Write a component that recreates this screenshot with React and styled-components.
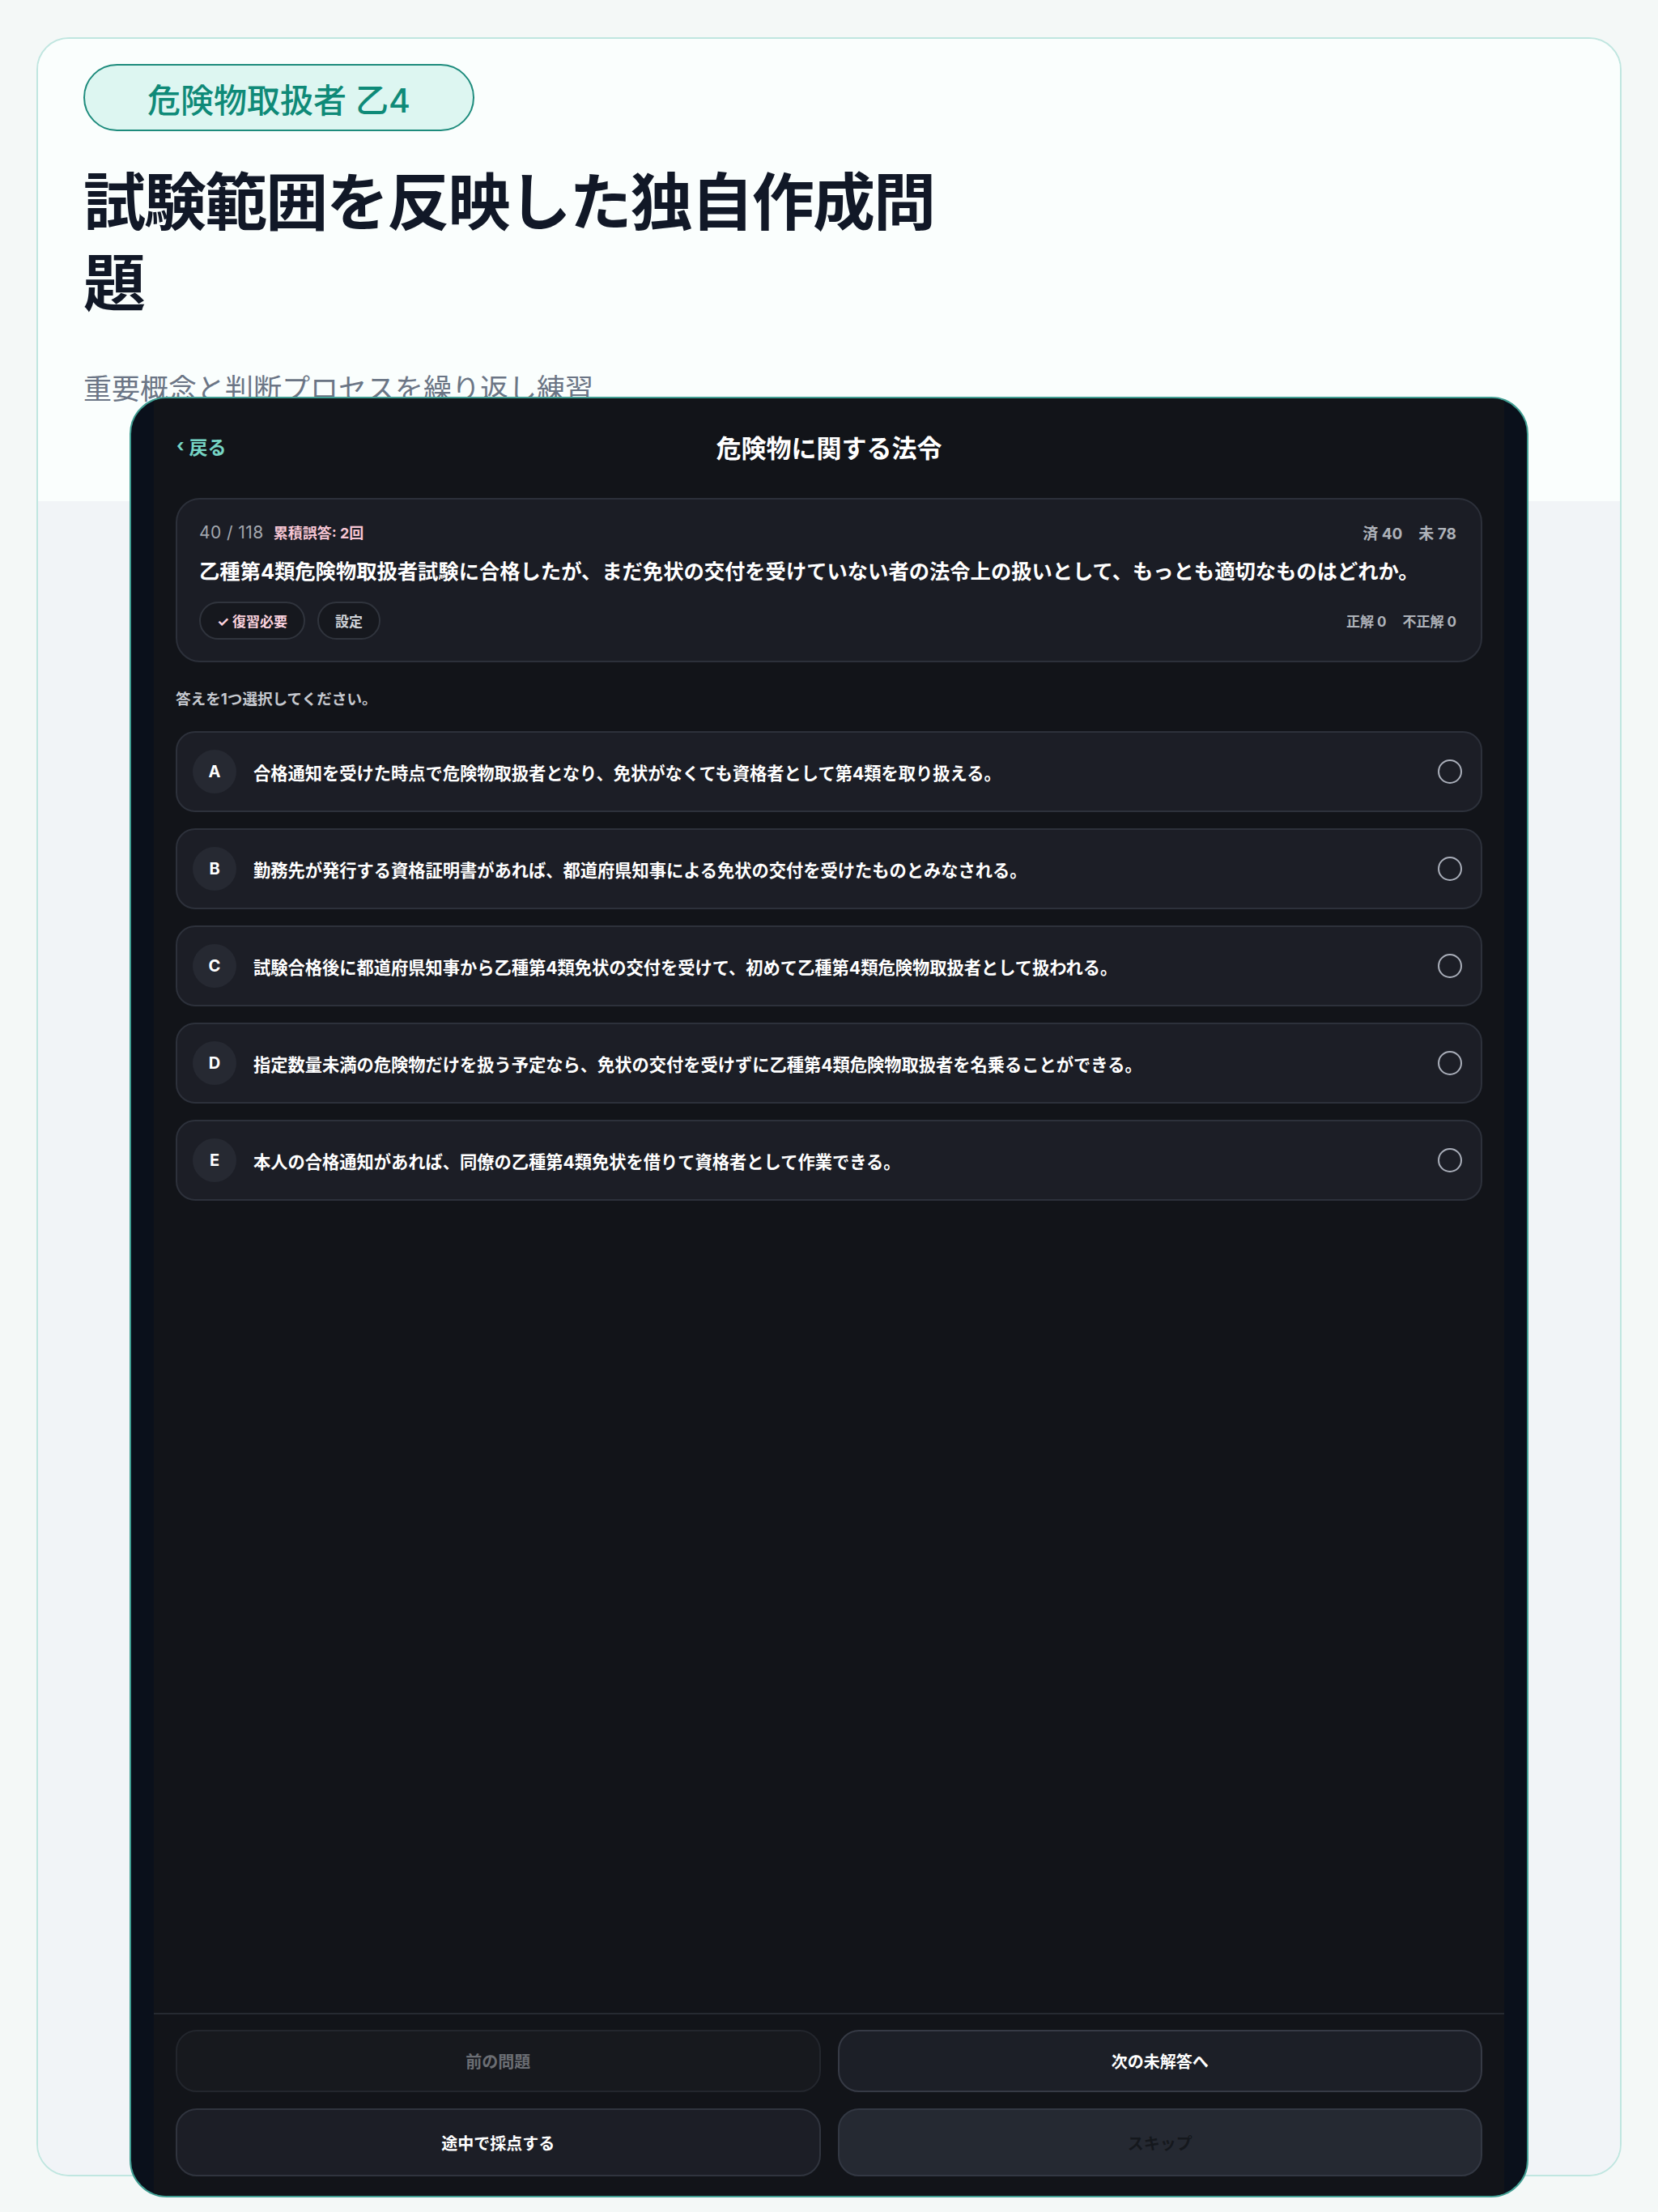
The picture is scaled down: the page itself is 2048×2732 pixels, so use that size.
import React from "react";
import styled, { createGlobalStyle } from "styled-components";

const GlobalStyle = createGlobalStyle`
  * {
    box-sizing: border-box;
  }
  body {
    margin: 0;
    background: #f4f8f7;
    font-family: Inter, "Noto Sans CJK JP", sans-serif;
  }
`;

const Page = styled.div`
  position: relative;
  width: 2048px;
  height: 2732px;
  padding: 46px 45px 44px;
`;

const Card = styled.div`
  display: flex;
  flex-direction: column;
  height: 100%;
  border: 2px solid #c0e6e0;
  border-radius: 40px;
  overflow: hidden;
`;

const CardHeader = styled.div`
  height: 571px;
  padding: 31px 56px 0;
  background: #fafefd;
`;

const CardBody = styled.div`
  flex: 1;
  background: #f1f4f7;
`;

const Badge = styled.div`
  display: inline-flex;
  align-items: center;
  height: 83px;
  padding: 0 77px;
  border: 2.5px solid #1d8b7c;
  border-radius: 999px;
  background: #ddf6f1;
  color: #0f8a78;
  font-size: 41px;
  font-weight: 500;
`;

const Title = styled.h1`
  max-width: 1100px;
  margin: 38px 0 0;
  color: #111827;
  font-size: 77px;
  font-weight: 700;
  line-height: 100px;
  letter-spacing: -0.025em;
`;

const Subtitle = styled.p`
  margin: 55px 0 0;
  color: #6b7585;
  font-size: 35px;
  line-height: 51px;
`;

const Modal = styled.div`
  position: absolute;
  left: 160px;
  top: 490px;
  width: 1728px;
  height: 2224px;
  padding: 0 28px;
  border: 2px solid #3f9d91;
  border-radius: 46px;
  background: #0a101b;
  overflow: hidden;
`;

const Panel = styled.div`
  display: flex;
  flex-direction: column;
  height: 100%;
  background: #121419;
`;

const TopBar = styled.div`
  position: relative;
  display: flex;
  align-items: center;
  justify-content: center;
  height: 118px;
  padding: 0 28px;
`;

const BackButton = styled.button`
  position: absolute;
  left: 28px;
  display: flex;
  align-items: center;
  gap: 6px;
  padding: 0;
  border: 0;
  background: none;
  color: #76d5c5;
  font-family: inherit;
  font-size: 23px;
  font-weight: 700;
  cursor: pointer;
`;

const Chevron = styled.span`
  font-size: 22px;
  transform: translateY(-1px);
`;

const TopTitle = styled.h2`
  margin: 0;
  color: #ffffff;
  font-size: 31px;
  font-weight: 700;
`;

const Content = styled.div`
  display: flex;
  flex-direction: column;
  padding: 5px 27px 0;
`;

const QuestionCard = styled.div`
  padding: 26px 30px 26px 27px;
  border: 2px solid #2c303a;
  border-radius: 30px;
  background: #1b1d25;
`;

const MetaRow = styled.div`
  display: flex;
  align-items: center;
  justify-content: space-between;
  height: 28px;
`;

const Counter = styled.span`
  color: #a3a7ae;
  font-size: 21px;
  letter-spacing: 0.02em;
`;

const Misses = styled.span`
  margin-left: 12px;
  color: #f7c6d4;
  font-size: 18px;
  font-weight: 700;
`;

const Stats = styled.div`
  display: flex;
  gap: 20px;
  color: #aeb2b9;
  font-size: ${(p) => p.size || 19}px;
  font-weight: 700;
`;

const QuestionText = styled.p`
  margin: 16px 0 0;
  color: #ffffff;
  font-size: 25.3px;
  font-weight: 700;
  line-height: 38px;
`;

const ChipRow = styled.div`
  display: flex;
  align-items: center;
  justify-content: space-between;
  margin-top: 18px;
`;

const Chips = styled.div`
  display: flex;
  gap: 15px;
`;

const Chip = styled.button`
  display: flex;
  align-items: center;
  gap: 6px;
  height: 47px;
  padding: 0 20px;
  border: 2px solid #30343d;
  border-radius: 999px;
  background: #16181e;
  color: ${(p) => (p.pink ? "#fbd3df" : "#d0d3d8")};
  font-family: inherit;
  font-size: 17px;
  font-weight: 700;
`;

const Prompt = styled.p`
  margin: 32px 0 0;
  color: #c5c8ce;
  font-size: 18.6px;
  font-weight: 700;
  line-height: 26px;
`;

const Options = styled.div`
  display: flex;
  flex-direction: column;
  gap: 20px;
  margin-top: 27px;
`;

const Option = styled.button`
  display: flex;
  align-items: center;
  height: 100px;
  padding: 0 23px 0 19px;
  border: 2px solid #2d313b;
  border-radius: 24px;
  background: #1c1e26;
  font-family: inherit;
  text-align: left;
  cursor: pointer;
`;

const Letter = styled.span`
  display: flex;
  align-items: center;
  justify-content: center;
  flex: none;
  width: 54px;
  height: 54px;
  border-radius: 50%;
  background: #262932;
  color: #ffffff;
  font-size: 20px;
  font-weight: 700;
`;

const OptionText = styled.span`
  flex: 1;
  margin-left: 21px;
  color: #ffffff;
  font-size: 21.25px;
  font-weight: 700;
`;

const Radio = styled.span`
  flex: none;
  width: 30px;
  height: 30px;
  border: 2.5px solid #a9aeb9;
  border-radius: 50%;
`;

const Spacer = styled.div`
  flex: 1;
`;

const Footer = styled.div`
  display: grid;
  grid-template-columns: 1fr 1fr;
  grid-template-rows: 77px 84px;
  gap: 20px 21px;
  padding: 19px 27px 24px;
  border-top: 2px solid #262a31;
`;

const tones = {
  muted: { bg: "#17191e", border: "#23262d", color: "#6b6e74" },
  main: { bg: "#1c1f27", border: "#363a45", color: "#ffffff" },
  plain: { bg: "#1c1e26", border: "#30343e", color: "#ffffff" },
  dim: { bg: "#252932", border: "#333843", color: "#15181d" },
};

const FooterButton = styled.button`
  border: 2px solid ${(p) => tones[p.tone].border};
  border-radius: 26px;
  background: ${(p) => tones[p.tone].bg};
  color: ${(p) => tones[p.tone].color};
  font-family: inherit;
  font-size: 20px;
  font-weight: 700;
  cursor: pointer;
`;

const options = [
  ["A", "合格通知を受けた時点で危険物取扱者となり、免状がなくても資格者として第4類を取り扱える。"],
  ["B", "勤務先が発行する資格証明書があれば、都道府県知事による免状の交付を受けたものとみなされる。"],
  ["C", "試験合格後に都道府県知事から乙種第4類免状の交付を受けて、初めて乙種第4類危険物取扱者として扱われる。"],
  ["D", "指定数量未満の危険物だけを扱う予定なら、免状の交付を受けずに乙種第4類危険物取扱者を名乗ることができる。"],
  ["E", "本人の合格通知があれば、同僚の乙種第4類免状を借りて資格者として作業できる。"],
];

export default function App() {
  return (
    <>
      <GlobalStyle />
      <Page>
        <Card>
          <CardHeader>
            <Badge>危険物取扱者 乙4</Badge>
            <Title>試験範囲を反映した独自作成問題</Title>
            <Subtitle>重要概念と判断プロセスを繰り返し練習</Subtitle>
          </CardHeader>
          <CardBody />
        </Card>

        <Modal>
          <Panel>
            <TopBar>
              <BackButton>
                <Chevron>‹</Chevron>戻る
              </BackButton>
              <TopTitle>危険物に関する法令</TopTitle>
            </TopBar>

            <Content>
              <QuestionCard>
                <MetaRow>
                  <div>
                    <Counter>40 / 118</Counter>
                    <Misses>累積誤答: 2回</Misses>
                  </div>
                  <Stats>
                    <span>済 40</span>
                    <span>未 78</span>
                  </Stats>
                </MetaRow>
                <QuestionText>
                  乙種第4類危険物取扱者試験に合格したが、まだ免状の交付を受けていない者の法令上の扱いとして、もっとも適切なものはどれか。
                </QuestionText>
                <ChipRow>
                  <Chips>
                    <Chip pink>✓ 復習必要</Chip>
                    <Chip>設定</Chip>
                  </Chips>
                  <Stats size={17}>
                    <span>正解 0</span>
                    <span>不正解 0</span>
                  </Stats>
                </ChipRow>
              </QuestionCard>

              <Prompt>答えを1つ選択してください。</Prompt>

              <Options>
                {options.map(([key, text]) => (
                  <Option key={key}>
                    <Letter>{key}</Letter>
                    <OptionText>{text}</OptionText>
                    <Radio />
                  </Option>
                ))}
              </Options>
            </Content>

            <Spacer />

            <Footer>
              <FooterButton tone="muted">前の問題</FooterButton>
              <FooterButton tone="main">次の未解答へ</FooterButton>
              <FooterButton tone="plain">途中で採点する</FooterButton>
              <FooterButton tone="dim">スキップ</FooterButton>
            </Footer>
          </Panel>
        </Modal>
      </Page>
    </>
  );
}
